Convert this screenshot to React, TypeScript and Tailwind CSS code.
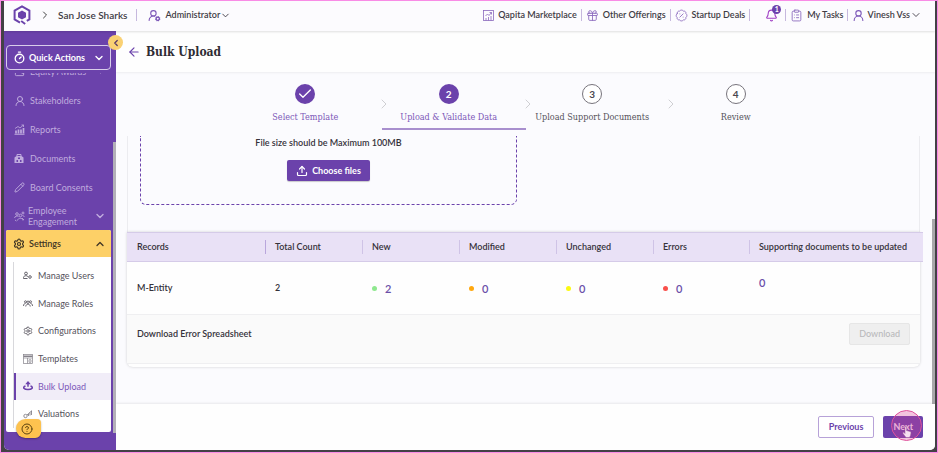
import type { ReactNode } from "react";
import {
  ArrowLeft,
  BadgePercent,
  Bell,
  Check,
  ChevronDown,
  ChevronLeft,
  ChevronRight,
  ChevronUp,
  CircleQuestionMark,
  ClipboardList,
  Gift,
  Pencil,
  Settings,
  Timer,
  Upload,
  UserRound,
  UserRoundCog,
  Wallet,
} from "lucide-react";

const LATO = "font-['Lato','Liberation_Sans',sans-serif]";
const SLAB = "font-['Roboto_Slab','DejaVu_Serif_Condensed','DejaVu_Serif',serif]";

function Logo() {
  return (
    <svg width="18" height="20" viewBox="0 0 18 20" fill="none" className="shrink-0">
      <path d="M7 17.6 1.6 14.4V5.6L9 1.4l7.4 4.2v8.8l-2.6 1.5" stroke="#6b42ab" strokeWidth="2" />
      <path d="M9 5.4 13 7.7v4.6L9 14.6l-4-2.3V7.7z" fill="#6b42ab" />
      <path d="m8.2 16 4 3" stroke="#6b42ab" strokeWidth="1.8" />
    </svg>
  );
}

function MarketIcon() {
  return (
    <svg width="11" height="11" viewBox="0 0 22 22" fill="none" stroke="#8a68bd" strokeWidth="1.6" className="shrink-0">
      <rect x="1" y="1" width="20" height="20" />
      <path d="M5 12l4-4 3 3 5-6M13 5h4v4M6 21v-5M11 21v-7M16 21v-9" />
    </svg>
  );
}

function ReportsIcon() {
  return (
    <svg width="11" height="11" viewBox="0 0 22 22" fill="none" stroke="currentColor" strokeWidth="2">
      <path d="M1 20.5h20" />
      <path d="M4 19v-6M9 19v-8M14 19v-8M19 19V8" strokeWidth="3.4" />
      <path d="M2 9l6-4 4 3 7-6M15 2h4v4" strokeWidth="1.6" />
    </svg>
  );
}

function DocumentsIcon() {
  return (
    <svg width="10" height="11" viewBox="0 0 20 22">
      <path d="M6 6V3h8v3" fill="none" stroke="currentColor" strokeWidth="2" />
      <path
        fillRule="evenodd"
        d="M1 9l4-3h10l4 3v11H1zM8 9h4v3h-4zM5 14h3v4H5zM12 14h3v4h-3z"
        fill="currentColor"
      />
    </svg>
  );
}

function EngagementIcon() {
  return (
    <svg width="11" height="11" viewBox="0 0 22 22" fill="none" stroke="currentColor" strokeWidth="1.7">
      <circle cx="6" cy="6" r="2.6" />
      <circle cx="13" cy="9" r="2.6" />
      <circle cx="18" cy="4" r="2" />
      <path d="M1 14c1-4 5-5 8-3M7 19c1-6 10-6 11 0M17 9l4 2M2 18l3 2M16 14l4 4" />
    </svg>
  );
}

function UsersIcon() {
  return (
    <svg width="9" height="9" viewBox="0 0 18 18" fill="none" stroke="currentColor" strokeWidth="1.8">
      <circle cx="6" cy="5" r="2.8" />
      <path d="M1 15v-2c0-4 8-5 9-1M1 15h8" />
      <circle cx="14" cy="12" r="2.6" />
    </svg>
  );
}

function RolesIcon() {
  return (
    <svg width="10" height="9" viewBox="0 0 20 18" fill="none" stroke="currentColor" strokeWidth="1.7">
      <circle cx="5" cy="5.5" r="2" />
      <circle cx="15" cy="5.5" r="2" />
      <circle cx="10" cy="6.5" r="2.4" />
      <path d="M1 14c0-4 2-5 4-5M19 14c0-4-2-5-4-5M5.5 15c0-6 9-6 9 0" />
    </svg>
  );
}

function TemplatesIcon() {
  return (
    <svg width="10" height="10" viewBox="0 0 20 20" fill="none" stroke="#85828a" strokeWidth="1.4">
      <rect x="1" y="1" width="18" height="18" />
      <path d="M1 4.5h18" strokeWidth="3" />
      <path d="M1 8h18M9 8v11M12 11.5h4v5h-4z" />
    </svg>
  );
}

function UploadDiskIcon() {
  return (
    <svg width="10" height="10" viewBox="0 0 20 20" fill="none" stroke="currentColor" className="text-[#6b42ab]">
      <path d="M10 0 4.500 6.500h4v5h3v-5h4z" fill="currentColor" stroke="none" />
      <path d="M5 10C-2 12.500 2 17 10 17s12-4.500 5-7" strokeWidth="3.2" />
    </svg>
  );
}

function ValuationsIcon() {
  return (
    <svg width="10" height="10" viewBox="0 0 20 20" fill="none" stroke="#77747c" strokeWidth="1.6">
      <circle cx="5" cy="14" r="3.4" />
      <path d="M8 12l10-9M11 14v-4M14 13V7M17 12V4" />
    </svg>
  );
}

function HandCursor() {
  return (
    <svg width="10" height="12" viewBox="0 0 20 24">
      <path
        d="M6 2c0-2 3-2 3 0v7l7 2c2 .6 2 2 2 3l-1 5-2 4H8l-6-8c-1-2 1-3 2-2l2 2z"
        fill="#f6dff0"
        stroke="#a0569c"
      />
    </svg>
  );
}

function Divider() {
  return <span className="h-3 w-px shrink-0 bg-[#c6b8de]" />;
}

function TopLink({ icon, children }: { icon: ReactNode; children: ReactNode }) {
  return (
    <button type="button" className="flex items-center gap-1 whitespace-nowrap">
      {icon}
      {children}
    </button>
  );
}

function TopBar() {
  return (
    <header className="relative z-10 flex h-[30px] shrink-0 items-center justify-between bg-[#fcfbfe] pr-[13px] pb-[2px] pl-[9px] text-[9px] font-semibold text-[#3f3b45] shadow-[0_1px_2px_rgba(0,0,0,0.12)]">
      <div className="flex items-center">
        <Logo />
        <ChevronRight size={12} strokeWidth={2} className="ml-2 text-[#444]" />
        <span className="ml-[7px] text-[10px] whitespace-nowrap">San Jose Sharks</span>
        <span className="mr-[11px] ml-[9px] flex">
          <Divider />
        </span>
        <button type="button" className="flex items-center whitespace-nowrap">
          <UserRoundCog size={13} strokeWidth={2} className="mr-1 text-[#7c57b8]" />
          Administrator
          <ChevronDown size={11} strokeWidth={2} />
        </button>
      </div>
      <nav className="flex items-center gap-1">
        <TopLink icon={<MarketIcon />}>Qapita Marketplace</TopLink>
        <Divider />
        <TopLink icon={<Gift size={13} strokeWidth={1.6} className="text-[#8a68bd]" />}>Other Offerings</TopLink>
        <Divider />
        <TopLink icon={<BadgePercent size={13} strokeWidth={1.6} className="text-[#8a68bd]" />}>Startup Deals</TopLink>
        <Divider />
        <button type="button" aria-label="Notifications" className="relative mr-[3px] ml-[11px]">
          <Bell size={13} strokeWidth={2} className="text-[#a03fc4]" />
          <span className="absolute -top-1 -right-[3px] flex h-[9px] w-[9px] items-center justify-center rounded-full bg-[#6b42ab] text-[7px] leading-none font-bold text-white">
            1
          </span>
        </button>
        <Divider />
        <TopLink icon={<ClipboardList size={13} strokeWidth={1.6} className="text-[#8a68bd]" />}>My Tasks</TopLink>
        <Divider />
        <button type="button" className="flex items-center whitespace-nowrap">
          <UserRound size={13} strokeWidth={2} className="mr-[2px] text-[#7c57b8]" />
          Vinesh Vss
          <ChevronDown size={12} strokeWidth={1.8} />
        </button>
      </nav>
    </header>
  );
}

const navItems: { label: string; icon: ReactNode; more?: boolean }[] = [
  { label: "Equity Awards", icon: <Wallet size={11} />, more: true },
  { label: "Stakeholders", icon: <UserRound size={12} /> },
  { label: "Reports", icon: <ReportsIcon /> },
  { label: "Documents", icon: <DocumentsIcon /> },
  { label: "Board Consents", icon: <Pencil size={11} /> },
];

const settingItems: { label: string; icon: ReactNode }[] = [
  { label: "Manage Users", icon: <UsersIcon /> },
  { label: "Manage Roles", icon: <RolesIcon /> },
  { label: "Configurations", icon: <Settings size={10} /> },
  { label: "Templates", icon: <TemplatesIcon /> },
  { label: "Bulk Upload", icon: <UploadDiskIcon /> },
  { label: "Valuations", icon: <ValuationsIcon /> },
];

function Sidebar() {
  return (
    <aside className="relative flex w-28 shrink-0 flex-col bg-[#6b42ab] pt-[14px]">
      <button
        type="button"
        className="mr-[5px] ml-[2px] flex h-[25px] shrink-0 items-center rounded-[4px] border border-[#d9cdea] pr-[5px] pl-[6px] text-[9px] font-bold text-white"
      >
        <Timer size={13} strokeWidth={2.4} />
        <span className="ml-[3px] flex-1 text-left whitespace-nowrap">Quick Actions</span>
        <ChevronDown size={12} strokeWidth={2.8} />
      </button>
      <button
        type="button"
        aria-label="Collapse menu"
        className="absolute top-1 -right-[7px] z-20 flex h-[15px] w-[15px] items-center justify-center rounded-full bg-[#fad173] text-[#5a3a66]"
      >
        <ChevronLeft size={10} strokeWidth={3} />
      </button>

      <div className="mt-[3px] flex min-h-0 flex-1 overflow-hidden">
        <nav className="flex min-w-0 flex-1 flex-col justify-end overflow-hidden pr-[2px] pb-[18px] pl-[2px] text-[9px] text-[#c0acde]">
          {navItems.map(({ label, icon, more }) => (
            <a key={label} href="#" className="flex h-[29px] shrink-0 items-center pr-[5px] pl-2">
              <span className="flex w-3 shrink-0">{icon}</span>
              <span className="ml-1 flex-1 whitespace-nowrap">{label}</span>
              {more && <ChevronDown size={11} strokeWidth={2.4} />}
            </a>
          ))}
          <a href="#" className="flex h-7 shrink-0 items-center pr-[5px] pl-2 leading-[11px]">
            <span className="flex w-3 shrink-0">
              <EngagementIcon />
            </span>
            <span className="ml-[2px] flex-1">
              Employee
              <br />
              Engagement
            </span>
            <ChevronDown size={12} strokeWidth={2.8} />
          </a>
          <div className="shrink-0 overflow-hidden rounded-[2px] bg-white">
            <button
              type="button"
              className="flex h-[27px] w-full items-center bg-[#fdd067] pr-[5px] pl-[7px] font-semibold text-[#3f3424]"
            >
              <Settings size={12} strokeWidth={2.4} />
              <span className="ml-1 flex-1 text-left">Settings</span>
              <ChevronUp size={12} strokeWidth={2.6} />
            </button>
            <div className="pt-[5px] pb-1 pl-[7px]">
              <div className="grid h-[166px] auto-rows-fr border-l border-[#d8d8dc] text-[#55525c]">
                {settingItems.map(({ label, icon }) => {
                  const active = label === "Bulk Upload";
                  return (
                    <a
                      key={label}
                      href="#"
                      className={
                        active
                          ? "flex items-center border-l-2 border-[#6b42ab] bg-[#f1edf8] pl-[7px] text-[#7c57b8]"
                          : "flex items-center pl-[9px]"
                      }
                    >
                      <span className="flex w-[10px] shrink-0">{icon}</span>
                      <span className="ml-[5px] whitespace-nowrap">{label}</span>
                    </a>
                  );
                })}
              </div>
            </div>
          </div>
        </nav>
        <div className="mt-[69px] mb-[17px] w-[3px] shrink-0 bg-[#b3b0b8]" />
      </div>

      <button
        type="button"
        aria-label="Help"
        className="absolute bottom-3 left-3 flex h-[19px] w-[25px] items-center justify-center rounded-tl-[10px] rounded-tr-[4px] rounded-br-[6px] rounded-bl-[10px] bg-[#fdc24f] pr-1 text-[#5b4210] shadow-[0_1px_2px_rgba(0,0,0,0.3)]"
      >
        <CircleQuestionMark size={12} strokeWidth={2} />
      </button>
    </aside>
  );
}

const steps = ["Select Template", "Upload & Validate Data", "Upload Support Documents", "Review"];

function Stepper() {
  return (
    <ol className="grid w-full max-w-[574px] grid-cols-4 self-center">
      {steps.map((label, i) => (
        <li
          key={label}
          className={
            i === 1
              ? "relative flex h-[46px] flex-col items-center border-b-2 border-[#a88fce] pr-[10px]"
              : "relative flex h-[46px] flex-col items-center pr-[10px]"
          }
        >
          {i > 0 && <ChevronRight size={16} strokeWidth={1.2} className="absolute top-3 -left-[6px] text-[#c4c4c8]" />}
          <span
            className={
              i < 2
                ? "flex h-5 w-5 shrink-0 items-center justify-center rounded-full bg-[#6b42ab] text-[10px] font-bold text-white"
                : "flex h-5 w-5 shrink-0 items-center justify-center rounded-full border border-[#77747c] bg-white text-[10px] font-bold text-[#4a474f]"
            }
          >
            {i === 0 ? <Check size={16} strokeWidth={2} /> : i + 1}
          </span>
          <span
            className={
              i < 2
                ? `${SLAB} mt-[7px] text-[9px] leading-3 whitespace-nowrap text-[#7c57b8]`
                : `${SLAB} mt-[7px] text-[9px] leading-3 whitespace-nowrap text-[#55525a]`
            }
          >
            {label}
          </span>
        </li>
      ))}
    </ol>
  );
}

const headings = ["Records", "Total Count", "New", "Modified", "Unchanged", "Errors", "Supporting documents to be updated"];

function Count({ dot, value }: { dot: string; value: number }) {
  return (
    <span className="flex items-center gap-2 pt-[2px] text-[11px] font-semibold text-[#6b4fa8]">
      <span className={`h-[5px] w-[5px] rounded-full ${dot}`} />
      {value}
    </span>
  );
}

function RecordsTable() {
  return (
    <table className="w-[calc(100%+3px)] table-fixed border-collapse text-left">
      <colgroup>
        <col className="w-[139px]" />
        <col className="w-[97px]" />
        <col className="w-[97px]" />
        <col className="w-[97px]" />
        <col className="w-[97px]" />
        <col className="w-[96px]" />
        <col />
      </colgroup>
      <thead>
        <tr className="h-[29px] border-y border-[#d5cbe8] bg-[#e9e1f6]">
          {headings.map((h, i) => (
            <th key={h} scope="col" className="p-0 font-semibold">
              <div
                className={
                  i === 0
                    ? "border-r border-[#b9a6dc] pl-[10px] leading-[14px] whitespace-nowrap"
                    : i === headings.length - 1
                      ? "pl-[9px] leading-[14px] whitespace-nowrap"
                      : "border-r border-[#cfc3e6] pl-[9px] leading-[14px] whitespace-nowrap"
                }
              >
                {h}
              </div>
            </th>
          ))}
        </tr>
      </thead>
      <tbody>
        <tr className="h-[52px]">
          <td className="p-0 pl-[10px]">M-Entity</td>
          <td className="p-0 pl-[9px]">2</td>
          <td className="p-0 pl-[9px]"><Count dot="bg-[#8fe88f]" value={2} /></td>
          <td className="p-0 pl-[9px]"><Count dot="bg-[#ffa80f]" value={0} /></td>
          <td className="p-0 pl-[9px]"><Count dot="bg-[#fbf913]" value={0} /></td>
          <td className="p-0 pl-[9px]"><Count dot="bg-[#f9504b]" value={0} /></td>
          <td className="p-0 pb-[10px] pl-[9px] text-[11px] text-[#6b4fa8]">0</td>
        </tr>
      </tbody>
    </table>
  );
}

function Content() {
  return (
    <div className="flex min-h-0 flex-1 flex-col pt-3">
      <Stepper />
      <div className="mt-[6px] flex min-h-0 flex-1 overflow-hidden">
        <div className="min-w-0 flex-1 pl-[11px] text-[9px] font-semibold text-[#35323a]">
          <div className="mr-3 border-x border-[#ececf0] px-3 pb-[27px]">
            <div className="flex h-[69px] max-w-[377px] flex-col items-center rounded-b-[6px] border border-t-0 border-dashed border-[#6b42ab]">
              <p className="leading-[13px]">File size should be Maximum 100MB</p>
              <button
                type="button"
                className="mt-[11px] flex h-[21px] items-center gap-1 rounded-[2px] bg-[#6b42ab] px-[9px] font-bold text-white shadow-[0_1px_1px_rgba(0,0,0,0.2)]"
              >
                <Upload size={12} strokeWidth={2.4} />
                Choose files
              </button>
            </div>
          </div>
          <section className="mr-3 rounded-b-[6px] bg-[#fefefe] shadow-[0_0_3px_rgba(0,0,0,0.18)]">
            <RecordsTable />
            <div className="flex h-[50px] items-center justify-between border-y border-[#efeff1] bg-[#fafafa] pr-[10px] pb-[9px] pl-[10px]">
              Download Error Spreadsheet
              <button
                type="button"
                disabled
                className="h-[22px] rounded-[2px] border border-[#e6e6e6] bg-[#efefef] px-[9px] font-medium text-[#b9b9bb]"
              >
                Download
              </button>
            </div>
            <div className="h-[3px]" />
          </section>
        </div>
        <div className="mt-[83px] w-[3px] shrink-0 bg-[#a9a8ac]" />
      </div>
    </div>
  );
}

export default function App() {
  return (
    <div className={`${LATO} flex h-screen flex-col border border-[#f98be6] bg-[#434145] pr-[2px] pb-[2px] pl-[3px]`}>
      <div className="flex min-h-0 flex-1 flex-col overflow-hidden rounded-b-[5px] bg-[#fbfbfe]">
        <TopBar />
        <div className="flex min-h-0 flex-1">
          <Sidebar />
          <main className="flex min-w-0 flex-1 flex-col">
            <div className="flex h-[41px] shrink-0 items-center gap-[5px] bg-[#fefefe] pl-[11px] shadow-[0_1px_2px_rgba(0,0,0,0.06)]">
              <button type="button" aria-label="Back" className="text-[#6b42ab]">
                <ArrowLeft size={14} strokeWidth={2} />
              </button>
              <h1 className={`${SLAB} text-[12px] font-bold text-[#2f2c34]`}>Bulk Upload</h1>
            </div>
            <Content />
            <footer className="flex h-[46px] shrink-0 items-center justify-end gap-[9px] bg-[#fefefe] pr-3 text-[9px] font-bold shadow-[0_-1px_2px_rgba(0,0,0,0.08)]">
              <button type="button" className="h-[22px] rounded-[2px] border border-[#b7a2d8] bg-white px-[10px] text-[#6b42ab]">
                Previous
              </button>
              <button type="button" className="relative h-[22px] rounded-[2px] bg-[#6b42ab] px-[10px] text-[#f3e6f5]">
                Next
                <span className="absolute -top-[6px] left-2 flex h-[31px] w-[31px] items-center justify-center rounded-full border border-[#e0529c] bg-[#dc3c96]/30 pt-3">
                  <HandCursor />
                </span>
              </button>
            </footer>
          </main>
        </div>
      </div>
    </div>
  );
}
